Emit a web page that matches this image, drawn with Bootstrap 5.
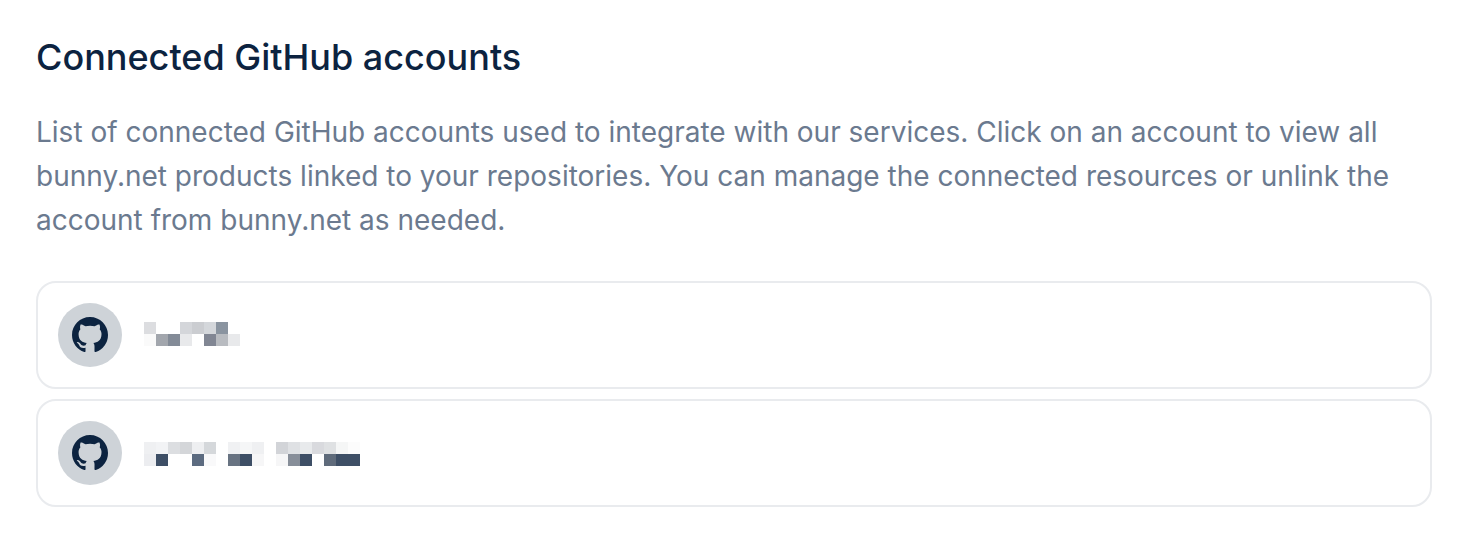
<!DOCTYPE html>
<html lang="en">
<head>
    <meta charset="UTF-8">
    <meta name="viewport" content="width=device-width, initial-scale=1.0">
    <title>Connected GitHub accounts</title>
    <link href="https://cdn.jsdelivr.net/npm/bootstrap@5.3.0/dist/css/bootstrap.min.css" rel="stylesheet">
    <script src="https://cdn.jsdelivr.net/npm/bootstrap@5.3.0/dist/js/bootstrap.bundle.min.js"></script>
    <style>
        body { background: #fff; font-family: Inter, "Liberation Sans", sans-serif; }
        .panel { padding: 36px 40px 0 36px; }
        .panel-title { font-family: Inter, sans-serif; font-size: 36px; font-weight: 500; line-height: 42px; color: #0c2340; margin: 0 0 32px; }
        .panel-text { font-size: 28px; line-height: 44px; color: #6b7a8f; margin: 0 0 39px; }
        .account-list { gap: 10px; }
        .account-row { border: 2px solid #e9ebee; border-radius: 20px; padding: 20px; height: 108px; gap: 22px; }
        .account-avatar { width: 64px; height: 64px; background: #ced3d8; }
        .account-avatar svg { width: 36px; height: 36px; fill: #0c2340; }
        .account-blur { display: block; height: 24px; }
        .blur-first { margin-bottom: 2px; }
        .blur-second { margin-top: 2px; }
    </style>
</head>
<body>
    <div class="panel">
        <h2 class="panel-title">Connected GitHub accounts</h2>
        <p class="panel-text">List of connected GitHub accounts used to integrate with our services. Click on an account to view all bunny.net products linked to your repositories. You can manage the connected resources or unlink the account from bunny.net as needed.</p>
        <div class="account-list d-flex flex-column">
            <div class="account-row d-flex align-items-center">
                <div class="account-avatar rounded-circle d-flex align-items-center justify-content-center flex-shrink-0">
                    <svg viewBox="0 0 16 16"><path d="M8 0C3.58 0 0 3.58 0 8c0 3.54 2.29 6.53 5.47 7.59.4.07.55-.17.55-.38 0-.19-.01-.82-.01-1.49-2.01.37-2.53-.49-2.69-.94-.09-.23-.48-.94-.82-1.13-.28-.15-.68-.52-.01-.53.63-.01 1.08.58 1.23.82.72 1.21 1.87.87 2.33.66.07-.52.28-.87.51-1.07-1.78-.2-3.64-.89-3.64-3.95 0-.87.31-1.59.82-2.15-.08-.2-.36-1.02.08-2.12 0 0 .67-.21 2.2.82.64-.18 1.32-.27 2-.27.68 0 1.36.09 2 .27 1.53-1.04 2.2-.82 2.2-.82.44 1.1.16 1.92.08 2.12.51.56.82 1.27.82 2.15 0 3.07-1.87 3.75-3.65 3.95.29.25.54.73.54 1.48 0 1.07-.01 1.93-.01 2.2 0 .21.15.46.55.38A8.013 8.013 0 0016 8c0-4.42-3.58-8-8-8z"/></svg>
                </div>
                <svg class="account-blur blur-first" width="96" height="24" shape-rendering="crispEdges">
                    <rect x="0" y="0" width="12" height="12" fill="#dcdde0"/>
                    <rect x="36" y="0" width="12" height="12" fill="#d4d6da"/>
                    <rect x="48" y="0" width="12" height="12" fill="#cbcdd1"/>
                    <rect x="60" y="0" width="12" height="12" fill="#d4d7db"/>
                    <rect x="72" y="0" width="12" height="12" fill="#8a94a0"/>
                    <rect x="0" y="12" width="12" height="12" fill="#fafafa"/>
                    <rect x="12" y="12" width="12" height="12" fill="#a2a6ad"/>
                    <rect x="24" y="12" width="12" height="12" fill="#838b97"/>
                    <rect x="36" y="12" width="12" height="12" fill="#e8e9eb"/>
                    <rect x="60" y="12" width="12" height="12" fill="#818693"/>
                    <rect x="72" y="12" width="12" height="12" fill="#b8bbc0"/>
                    <rect x="84" y="12" width="12" height="12" fill="#e8e9eb"/>
                </svg>
            </div>
            <div class="account-row d-flex align-items-center">
                <div class="account-avatar rounded-circle d-flex align-items-center justify-content-center flex-shrink-0">
                    <svg viewBox="0 0 16 16"><path d="M8 0C3.58 0 0 3.58 0 8c0 3.54 2.29 6.53 5.47 7.59.4.07.55-.17.55-.38 0-.19-.01-.82-.01-1.49-2.01.37-2.53-.49-2.69-.94-.09-.23-.48-.94-.82-1.13-.28-.15-.68-.52-.01-.53.63-.01 1.08.58 1.23.82.72 1.21 1.87.87 2.33.66.07-.52.28-.87.51-1.07-1.78-.2-3.64-.89-3.64-3.95 0-.87.31-1.59.82-2.15-.08-.2-.36-1.02.08-2.12 0 0 .67-.21 2.2.82.64-.18 1.32-.27 2-.27.68 0 1.36.09 2 .27 1.53-1.04 2.2-.82 2.2-.82.44 1.1.16 1.92.08 2.12.51.56.82 1.27.82 2.15 0 3.07-1.87 3.75-3.65 3.95.29.25.54.73.54 1.48 0 1.07-.01 1.93-.01 2.2 0 .21.15.46.55.38A8.013 8.013 0 0016 8c0-4.42-3.58-8-8-8z"/></svg>
                </div>
                <svg class="account-blur blur-second" width="216" height="24" shape-rendering="crispEdges">
                    <rect x="0" y="0" width="12" height="12" fill="#eff0f2"/>
                    <rect x="12" y="0" width="12" height="12" fill="#f2f3f5"/>
                    <rect x="24" y="0" width="12" height="12" fill="#dcdee1"/>
                    <rect x="36" y="0" width="12" height="12" fill="#d4d6d9"/>
                    <rect x="48" y="0" width="12" height="12" fill="#eeeff1"/>
                    <rect x="60" y="0" width="12" height="12" fill="#d5d8db"/>
                    <rect x="84" y="0" width="12" height="12" fill="#f0f1f3"/>
                    <rect x="96" y="0" width="12" height="12" fill="#f5f6f7"/>
                    <rect x="108" y="0" width="12" height="12" fill="#eff0f2"/>
                    <rect x="132" y="0" width="12" height="12" fill="#d2d4d8"/>
                    <rect x="144" y="0" width="12" height="12" fill="#dfe1e4"/>
                    <rect x="156" y="0" width="12" height="12" fill="#e8eaec"/>
                    <rect x="168" y="0" width="12" height="12" fill="#d9dade"/>
                    <rect x="180" y="0" width="12" height="12" fill="#dfe1e3"/>
                    <rect x="192" y="0" width="12" height="12" fill="#f5f6f6"/>
                    <rect x="204" y="0" width="12" height="12" fill="#fcfcfc"/>
                    <rect x="0" y="12" width="12" height="12" fill="#ecedf0"/>
                    <rect x="12" y="12" width="12" height="12" fill="#3e4f66"/>
                    <rect x="48" y="12" width="12" height="12" fill="#5c6b80"/>
                    <rect x="60" y="12" width="12" height="12" fill="#f9f9fa"/>
                    <rect x="84" y="12" width="12" height="12" fill="#687382"/>
                    <rect x="96" y="12" width="12" height="12" fill="#3e4f66"/>
                    <rect x="108" y="12" width="12" height="12" fill="#f6f6f7"/>
                    <rect x="132" y="12" width="12" height="12" fill="#f6f6f7"/>
                    <rect x="144" y="12" width="12" height="12" fill="#878e99"/>
                    <rect x="156" y="12" width="12" height="12" fill="#3e4f66"/>
                    <rect x="180" y="12" width="12" height="12" fill="#5f6b7b"/>
                    <rect x="192" y="12" width="24" height="12" fill="#3e4f66"/>
                </svg>
            </div>
        </div>
    </div>
</body>
</html>
